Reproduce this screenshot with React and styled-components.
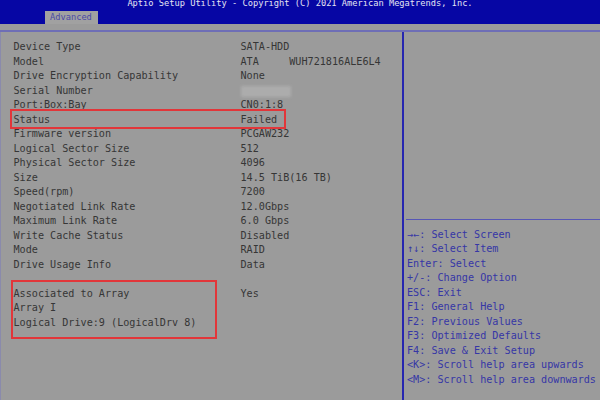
import styled, { createGlobalStyle } from 'styled-components';

const GlobalStyle = createGlobalStyle`
  html, body {
    margin: 0;
    padding: 0;
    background: #9b9b9b;
  }
`;

const details = [
  ['Device Type', 'SATA-HDD'],
  ['Model', 'ATA     WUH721816ALE6L4'],
  ['Drive Encryption Capability', 'None'],
  ['Serial Number', null],
  ['Port:Box:Bay', 'CN0:1:8'],
  ['Status', 'Failed'],
  ['Firmware version', 'PCGAW232'],
  ['Logical Sector Size', '512'],
  ['Physical Sector Size', '4096'],
  ['Size', '14.5 TiB(16 TB)'],
  ['Speed(rpm)', '7200'],
  ['Negotiated Link Rate', '12.0Gbps'],
  ['Maximum Link Rate', '6.0 Gbps'],
  ['Write Cache Status', 'Disabled'],
  ['Mode', 'RAID'],
  ['Drive Usage Info', 'Data'],
];

const help = [
  '\u2192\u2190: Select Screen',
  '\u2191\u2193: Select Item',
  'Enter: Select',
  '+/-: Change Option',
  'ESC: Exit',
  'F1: General Help',
  'F2: Previous Values',
  'F3: Optimized Defaults',
  'F4: Save & Exit Setup',
  '<K>: Scroll help area upwards',
  '<M>: Scroll help area downwards',
];

const App = () => {
  const renderRow = ([label, value]) => (
    <Row key={label}>
      <Label>{label}</Label>
      {value === null ? <Blurred /> : <Value>{value}</Value>}
    </Row>
  );

  return (
    <Screen>
      <GlobalStyle />
      <TopBar>
        <Title>Aptio Setup Utility - Copyright (C) 2021 American Megatrends, Inc.</Title>
        <Tabs>
          <Tab>Advanced</Tab>
        </Tabs>
      </TopBar>
      <Main>
        <LeftPanel>
          {details.slice(0, 5).map(renderRow)}
          <Marked $left={-4} $top={-4} $bottom={-1.5} $width={276}>
            {details.slice(5, 6).map(renderRow)}
          </Marked>
          {details.slice(6).map(renderRow)}
          <Row />
          <Marked $left={-3} $top={-6.5} $bottom={-9} $width={206}>
            <Row>
              <Label>Associated to Array</Label>
              <Value>Yes</Value>
            </Row>
            <Row>
              <Label>Array I</Label>
            </Row>
            <Row>
              <Label $wide>Logical Drive:9 (LogicalDrv 8)</Label>
            </Row>
          </Marked>
        </LeftPanel>
        <RightPanel>
          <InfoArea />
          <HelpList>
            {help.map((line) => (
              <HelpLine key={line}>{line}</HelpLine>
            ))}
          </HelpList>
        </RightPanel>
      </Main>
    </Screen>
  );
};

const Screen = styled.div`
  width: 600px;
  height: 400px;
  overflow: hidden;
  background: #9b9b9b;
  font-family: "DejaVu Sans Mono", "Liberation Mono", monospace;
  display: flex;
  flex-direction: column;
`;

const TopBar = styled.div`
  height: 24px;
  background: #0606a4;
  display: flex;
  flex-direction: column;
  align-items: center;
  flex-shrink: 0;
`;

const Title = styled.div`
  margin-top: -2px;
  font-size: 8.7px;
  line-height: 10px;
  color: #e4e4f2;
  white-space: pre;
`;

const Tabs = styled.div`
  align-self: stretch;
  display: flex;
  padding-left: 45px;
  margin-top: 3px;
  flex: 1;
`;

const Tab = styled.div`
  width: 53px;
  box-sizing: border-box;
  padding-left: 5px;
  background: #a1a1a1;
  color: #4a4aa6;
  font-size: 8.7px;
  line-height: 13px;
`;

const Main = styled.div`
  flex: 1;
  margin-top: 6px;
  border-top: 2px solid #6e6eb6;
  display: grid;
  grid-template-columns: 404px 1fr;
`;

const LeftPanel = styled.div`
  box-sizing: border-box;
  border-left: 1.5px solid #8a8aac;
  border-right: 2px solid #2626b0;
  padding: 8px 0 0 12.5px;
  font-size: 10.15px;
  color: #363636;
`;

const Row = styled.div`
  display: grid;
  grid-template-columns: 227px auto;
  height: 14.5px;
  line-height: 14.5px;
`;

const Label = styled.span`
  white-space: pre;
  grid-column: ${(p) => (p.$wide ? '1 / span 2' : 'auto')};
`;

const Value = styled.span`
  white-space: pre;
`;

const Blurred = styled.span`
  display: block;
  width: 50px;
  height: 11px;
  margin-top: 2px;
  background: #acacac;
  filter: blur(1.5px);
`;

const Marked = styled.div`
  position: relative;

  &::after {
    content: '';
    position: absolute;
    left: ${(p) => p.$left}px;
    top: ${(p) => p.$top}px;
    bottom: ${(p) => p.$bottom}px;
    width: ${(p) => p.$width}px;
    box-sizing: border-box;
    border: 2px solid #e2363a;
    pointer-events: none;
  }
`;

const RightPanel = styled.div`
  display: flex;
  flex-direction: column;
`;

const InfoArea = styled.div`
  height: 187px;
  margin-left: 2px;
  border-bottom: 1.5px solid #5656b6;
  flex-shrink: 0;
`;

const HelpList = styled.div`
  padding: 7.5px 0 0 3px;
  font-size: 10.15px;
  color: #3636a6;
`;

const HelpLine = styled.div`
  height: 14.5px;
  line-height: 14.5px;
  white-space: pre;
`;

export default App;
